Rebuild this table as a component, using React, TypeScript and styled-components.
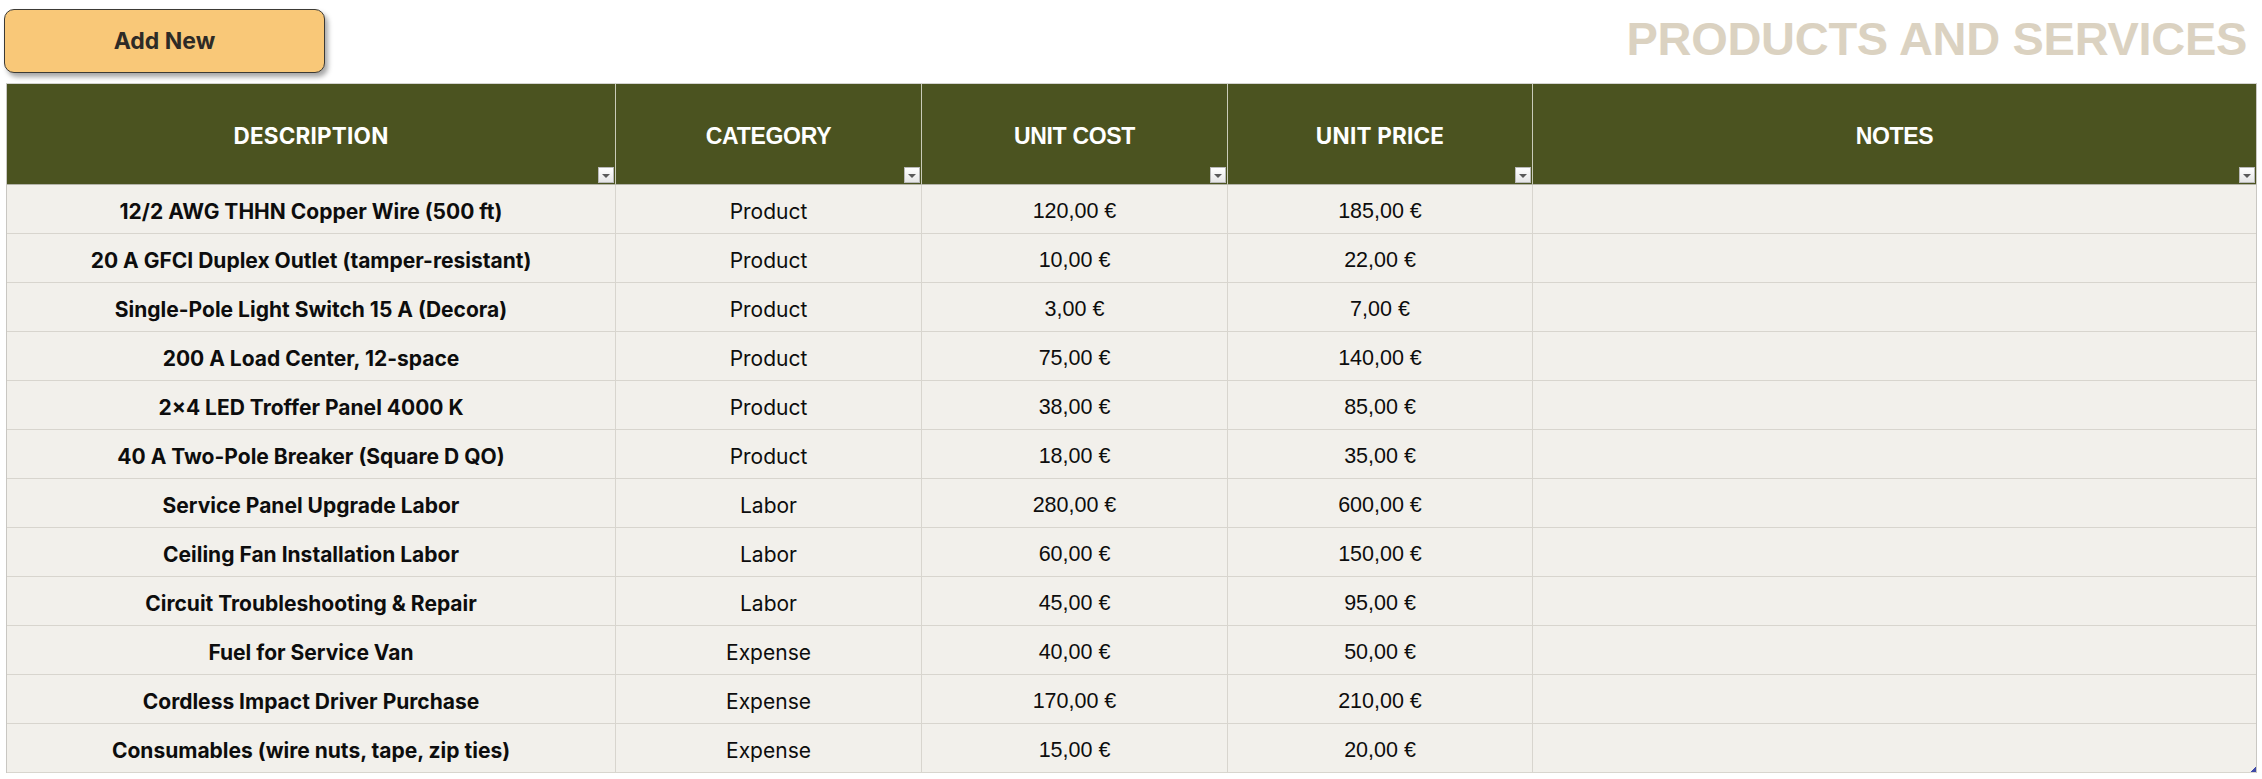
import React from "react";
import styled, { createGlobalStyle } from "styled-components";

const GlobalStyle = createGlobalStyle`
  html, body { margin: 0; padding: 0; background: #ffffff; }
  body { font-family: Inter, "Liberation Sans", sans-serif; }
  * { box-sizing: border-box; }
`;

const Page = styled.div`
  width: 2262px;
  display: flex;
  flex-direction: column;
`;

const TopBar = styled.div`
  height: 83px;
  display: flex;
  justify-content: space-between;
  align-items: flex-start;
`;

const AddButton = styled.button`
  margin: 9px 0 0 4px;
  width: 321px;
  height: 64px;
  background: #f9c878;
  border: 1px solid #3c3a35;
  border-radius: 10px;
  box-shadow: 3px 4px 5px rgba(0, 0, 0, 0.35);
  font-family: Inter, "Liberation Sans", sans-serif;
  font-weight: 700;
  font-size: 23px;
  color: #2e2b26;
  cursor: pointer;
  padding: 0;
`;

const Title = styled.h1`
  margin: 15px 15px 0 0;
  font-family: "Liberation Sans", Arial, sans-serif;
  font-weight: 700;
  font-size: 47px;
  line-height: 47px;
  color: #dbd2c1;
  letter-spacing: -0.3px;
`;

const Table = styled.div`
  position: relative;
  margin-left: 6px;
  width: 2251px;
  border-top: 1px solid #d4d4d0;
  border-left: 1px solid #c9c7c2;
  border-right: 1px solid #c9c7c2;
  display: grid;
  grid-template-columns: 609px 306px 306px 305px 723px;
`;

const HeadCell = styled.div<{ $last?: boolean; $narrow?: boolean }>`
  position: relative;
  height: 101px;
  background: #4b5320;
  border-right: ${(p) => (p.$last ? "none" : "1px solid #c9cbb8")};
  border-bottom: 1px solid #b3b3a8;
  display: flex;
  align-items: center;
  justify-content: center;
  padding-top: ${(p) => (p.$narrow ? "5px" : "2px")};
  color: #ffffff;
  font-family: ${(p) =>
    p.$narrow ? `"Liberation Sans", Arial, sans-serif` : `Inter, "Liberation Sans", sans-serif`};
  font-weight: 700;
  font-size: ${(p) => (p.$narrow ? "23px" : "22.5px")};
  letter-spacing: ${(p) => (p.$narrow ? "-0.3px" : "0.2px")};
`;

const FilterButton = styled.span`
  position: absolute;
  right: 1px;
  bottom: 1px;
  width: 16px;
  height: 16px;
  background: linear-gradient(#ffffff, #e6e6e6);
  border: 1px solid #b9b9b9;
  display: flex;
  align-items: center;
  justify-content: center;
  &::after {
    content: "";
    width: 0;
    height: 0;
    border-left: 4px solid transparent;
    border-right: 4px solid transparent;
    border-top: 4px solid #5a5a5a;
    margin-top: 2px;
  }
`;

const Cell = styled.div<{ $last?: boolean; $bold?: boolean; $num?: boolean }>`
  height: 49px;
  background: #f2f0eb;
  border-right: ${(p) => (p.$last ? "none" : "1px solid #d8d5ce")};
  border-bottom: 1px solid #d8d5ce;
  display: flex;
  align-items: center;
  justify-content: center;
  padding-top: 4px;
  color: #0d0d0d;
  font-family: ${(p) =>
    p.$num ? `"Liberation Sans", Arial, sans-serif` : `Inter, "Liberation Sans", sans-serif`};
  font-weight: ${(p) => (p.$bold ? 700 : 400)};
  font-size: ${(p) => (p.$num ? "21.5px" : "21px")};
  white-space: nowrap;
`;

const ResizeHandle = styled.span`
  position: absolute;
  right: 0px;
  bottom: 1px;
  width: 5px;
  height: 5px;
  background: linear-gradient(to bottom right, transparent 45%, #3f4aa8 46%);
`;

type Row = { d: string; c: string; cost: string; price: string };

const rows: Row[] = [
  { d: "12/2 AWG THHN Copper Wire (500 ft)", c: "Product", cost: "120,00 €", price: "185,00 €" },
  { d: "20 A GFCI Duplex Outlet (tamper-resistant)", c: "Product", cost: "10,00 €", price: "22,00 €" },
  { d: "Single-Pole Light Switch 15 A (Decora)", c: "Product", cost: "3,00 €", price: "7,00 €" },
  { d: "200 A Load Center, 12-space", c: "Product", cost: "75,00 €", price: "140,00 €" },
  { d: "2×4 LED Troffer Panel 4000 K", c: "Product", cost: "38,00 €", price: "85,00 €" },
  { d: "40 A Two-Pole Breaker (Square D QO)", c: "Product", cost: "18,00 €", price: "35,00 €" },
  { d: "Service Panel Upgrade Labor", c: "Labor", cost: "280,00 €", price: "600,00 €" },
  { d: "Ceiling Fan Installation Labor", c: "Labor", cost: "60,00 €", price: "150,00 €" },
  { d: "Circuit Troubleshooting & Repair", c: "Labor", cost: "45,00 €", price: "95,00 €" },
  { d: "Fuel for Service Van", c: "Expense", cost: "40,00 €", price: "50,00 €" },
  { d: "Cordless Impact Driver Purchase", c: "Expense", cost: "170,00 €", price: "210,00 €" },
  { d: "Consumables (wire nuts, tape, zip ties)", c: "Expense", cost: "15,00 €", price: "20,00 €" },
];

const headers: { label: string; narrow?: boolean }[] = [
  { label: "DESCRIPTION" },
  { label: "CATEGORY", narrow: true },
  { label: "UNIT COST", narrow: true },
  { label: "UNIT PRICE" },
  { label: "NOTES", narrow: true },
];

export default function App() {
  return (
    <Page>
      <GlobalStyle />
      <TopBar>
        <AddButton>Add New</AddButton>
        <Title>PRODUCTS AND SERVICES</Title>
      </TopBar>
      <Table>
        {headers.map((h, i) => (
          <HeadCell key={h.label} $narrow={h.narrow} $last={i === headers.length - 1}>
            {h.label}
            <FilterButton />
          </HeadCell>
        ))}
        {rows.map((r) => (
          <React.Fragment key={r.d}>
            <Cell $bold>{r.d}</Cell>
            <Cell>{r.c}</Cell>
            <Cell $num>{r.cost}</Cell>
            <Cell $num>{r.price}</Cell>
            <Cell $last />
          </React.Fragment>
        ))}
        <ResizeHandle />
      </Table>
    </Page>
  );
}
